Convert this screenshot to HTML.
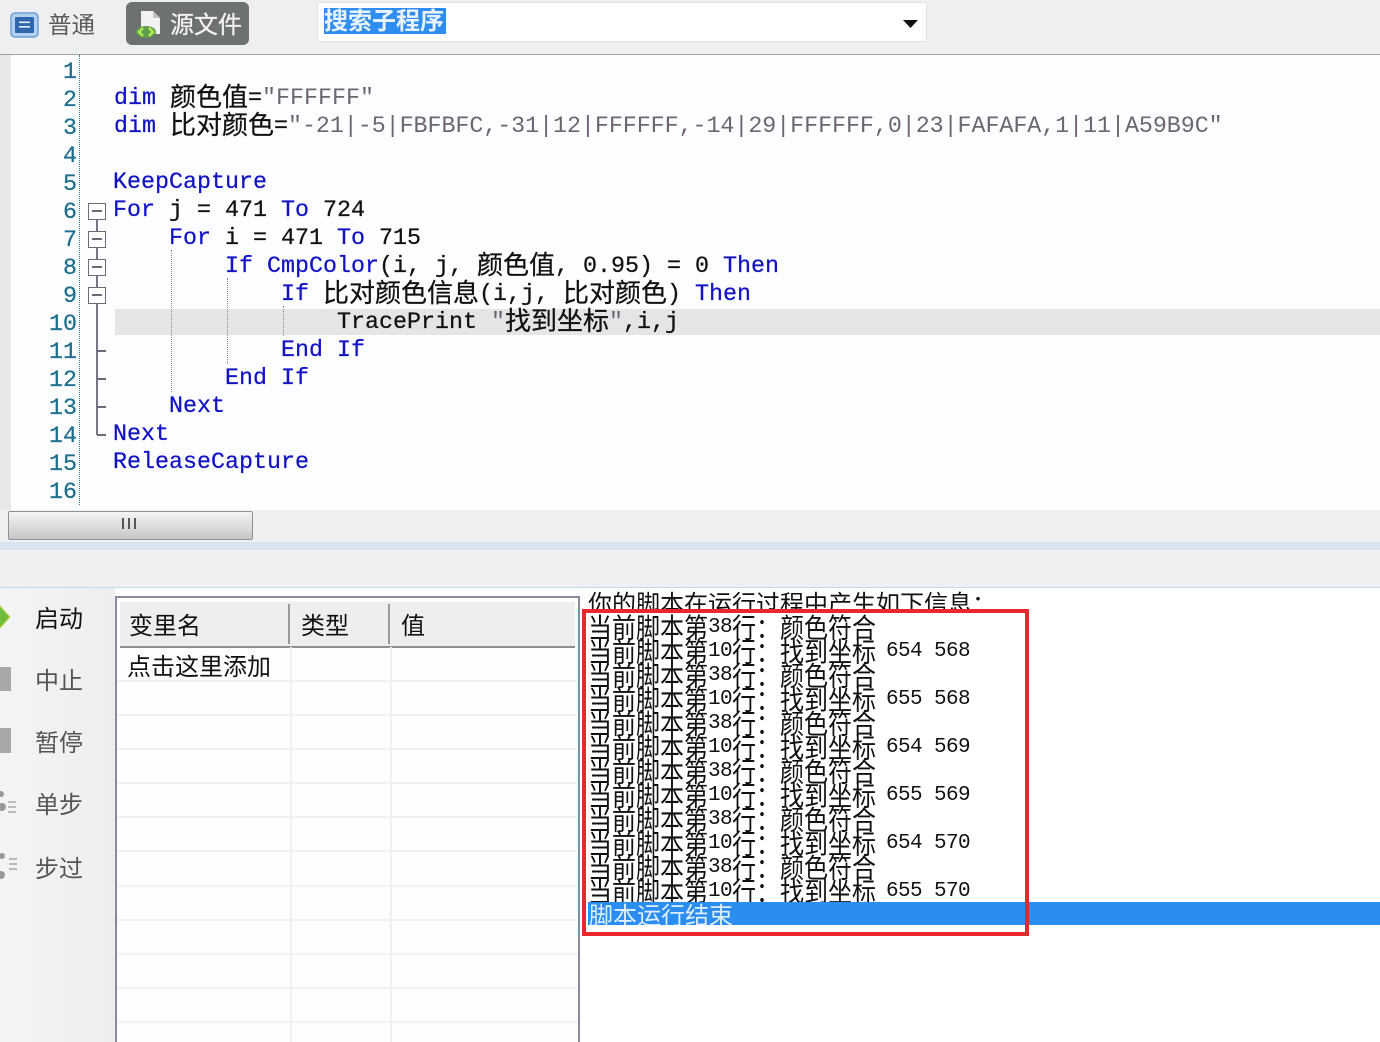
<!DOCTYPE html>
<html lang="zh"><head><meta charset="utf-8"><title>源文件</title>
<style>
html,body{margin:0;padding:0;background:#fff}
#p{position:relative;width:1380px;height:1042px;overflow:hidden;background:#fcfdff;font-family:"Liberation Mono","Noto Sans CJK SC",monospace}
#p div,#p svg{position:absolute}
.l{height:28px;line-height:28px;font-size:23.33px;white-space:pre;color:#111;-webkit-text-stroke:.25px currentColor;margin-top:1px}
.n{left:20px;width:57px;text-align:right;color:#1f6f8c;margin-top:2px}
.k{color:#1313c4}
.s{color:#6b6670;-webkit-text-stroke:0}
.c{display:inline-block;font-family:"Noto Sans CJK SC",sans-serif;font-size:26px;width:26px;text-align:center;color:#111;line-height:28px;vertical-align:top;position:relative;top:-3px}
.u{font-family:"Liberation Sans","Noto Sans CJK SC",sans-serif;font-size:24px;line-height:30px;height:30px;white-space:pre;margin-top:1px}
.o{left:588px;height:24px;line-height:24px;font-size:21px;letter-spacing:-.6px;white-space:pre;color:#111;width:400px;margin-top:2px}
.o b{display:inline-block;letter-spacing:0;font-weight:400;font-family:"Noto Sans CJK SC",sans-serif;font-size:24px;line-height:24px;transform:translateY(-2px) scaleY(1.14);vertical-align:top}
.o b:last-child{margin-right:-2px}
.h{left:117px;width:460px;height:2px;background:#f0f1f4}
.v{top:647px;width:2px;height:395px;background:#eff0f3}
.f{left:88px;width:18px;height:17px;box-sizing:border-box;border:1.5px solid #6f6878;background:#fff}
.f::after{content:"";position:absolute;left:3px;right:3px;top:6px;height:1.5px;background:#6f6878}
.t{left:97px;width:9px;height:1.5px;background:#6f6878}
.d{width:0;border-left:1px dotted #888}
</style></head><body><div id="p">

<!-- toolbar -->
<div style="left:0;top:0;width:1380px;height:54px;background:#eeeff1;border-bottom:1px solid #a3a3a0"></div>
<svg style="left:10px;top:12px" width="30" height="26" viewBox="0 0 30 26"><rect x="1" y="1" width="27" height="24" rx="4" fill="#b4d0f0" stroke="#6d9fd6" stroke-width="1.5"/><rect x="5" y="5" width="19" height="16" rx="1" fill="#2f66ad"/><rect x="9" y="9.500" width="11" height="1.600" fill="#e4eefa"/><rect x="9" y="14" width="11" height="1.600" fill="#e4eefa"/></svg>
<div class="u" style="left:48px;top:9px;color:#5a5a5a;font-size:23.5px">普通</div>
<div style="left:126px;top:2px;width:123px;height:43px;background:#6d716f;border-radius:6px"></div>
<svg style="left:132px;top:9px" width="32" height="30" viewBox="0 0 32 30"><path d="M9 2h12l7 7v16H9z" fill="#f2f2f2"/><path d="M21 2v7h7z" fill="#c4c4c4"/><ellipse cx="14" cy="23" rx="10" ry="6" fill="#5e9e4a"/><path d="M11 19l-4 4 4 4M17 19l4 4-4 4" fill="none" stroke="#b6ec4c" stroke-width="2.400"/></svg>
<div class="u" style="left:170px;top:10px;color:#f2f2f2;-webkit-text-stroke:.3px #f2f2f2">源文件</div>
<div style="left:317px;top:2px;width:610px;height:40px;background:#fff;border-radius:3px;border:1px solid #dfe3e8;box-sizing:border-box"></div>
<div style="left:324px;top:8px;width:122px;height:26px;background:#2f8df0"></div>
<div class="u" style="left:324px;top:6px;color:#e8f3ff;font-weight:700">搜索子程序</div>
<svg style="left:903px;top:19px" width="16" height="10" viewBox="0 0 16 10"><path d="M0 1h15L7.500 9z" fill="#111"/></svg>

<!-- editor -->
<div style="left:0;top:55px;width:11px;height:455px;background:#e7e8ea"></div>
<div style="left:79px;top:55px;height:450px;width:0;border-left:1px dotted #1f7a94"></div>
<div style="left:115px;top:309px;width:1265px;height:26px;background:#e4e5e6"></div>
<div class="d" style="left:171px;top:250px;height:142px"></div>
<div class="d" style="left:227px;top:278px;height:86px"></div>
<div class="d" style="left:283px;top:306px;height:30px"></div>

<div class="l n" style="top:57px">1</div>
<div class="l n" style="top:85px">2</div>
<div class="l n" style="top:113px">3</div>
<div class="l n" style="top:141px">4</div>
<div class="l n" style="top:169px">5</div>
<div class="l n" style="top:197px">6</div>
<div class="l n" style="top:225px">7</div>
<div class="l n" style="top:253px">8</div>
<div class="l n" style="top:281px">9</div>
<div class="l n" style="top:309px">10</div>
<div class="l n" style="top:337px">11</div>
<div class="l n" style="top:365px">12</div>
<div class="l n" style="top:393px">13</div>
<div class="l n" style="top:421px">14</div>
<div class="l n" style="top:449px">15</div>
<div class="l n" style="top:477px">16</div>

<div style="left:96px;top:205px;width:2px;height:230px;background:#7a7484"></div>
<div class="f" style="top:203px"></div>
<div class="f" style="top:231px"></div>
<div class="f" style="top:259px"></div>
<div class="f" style="top:287px"></div>
<div class="t" style="top:350px"></div>
<div class="t" style="top:378px"></div>
<div class="t" style="top:406px"></div>
<div class="t" style="top:434px"></div>

<div class="l" style="left:114px;top:84px"><span class="k">dim</span> <span class="c">颜</span><span class="c">色</span><span class="c">值</span>=<span class="s">"FFFFFF"</span></div>
<div class="l" style="left:114px;top:112px"><span class="k">dim</span> <span class="c">比</span><span class="c">对</span><span class="c">颜</span><span class="c">色</span>=<span class="s" style="letter-spacing:-.05px">"-21|-5|FBFBFC,-31|12|FFFFFF,-14|29|FFFFFF,0|23|FAFAFA,1|11|A59B9C"</span></div>
<div class="l k" style="left:113px;top:168px">KeepCapture</div>
<div class="l" style="left:113px;top:196px"><span class="k">For</span> j = 471 <span class="k">To</span> 724</div>
<div class="l" style="left:169px;top:224px"><span class="k">For</span> i = 471 <span class="k">To</span> 715</div>
<div class="l" style="left:225px;top:252px"><span class="k">If CmpColor</span>(i, j, <span class="c">颜</span><span class="c">色</span><span class="c">值</span>, 0.95) = 0 <span class="k">Then</span></div>
<div class="l" style="left:281px;top:280px"><span class="k">If</span> <span class="c">比</span><span class="c">对</span><span class="c">颜</span><span class="c">色</span><span class="c">信</span><span class="c">息</span>(i,j, <span class="c">比</span><span class="c">对</span><span class="c">颜</span><span class="c">色</span>) <span class="k">Then</span></div>
<div class="l" style="left:337px;top:308px">TracePrint <span class="s">"</span><span class="c">找</span><span class="c">到</span><span class="c">坐</span><span class="c">标</span><span class="s">"</span>,i,j</div>
<div class="l k" style="left:281px;top:336px">End If</div>
<div class="l k" style="left:225px;top:364px">End If</div>
<div class="l k" style="left:169px;top:392px">Next</div>
<div class="l k" style="left:113px;top:420px">Next</div>
<div class="l k" style="left:113px;top:448px">ReleaseCapture</div>

<!-- scrollbar -->
<div style="left:0;top:510px;width:1380px;height:32px;background:#eef0f2"></div>
<div style="left:8px;top:511px;width:243px;height:27px;border:1px solid #8f9296;border-radius:2px;background:linear-gradient(#f4f4f5,#dcdcde 55%,#c4c5c8)"></div>
<div style="left:122px;top:518px;width:2px;height:11px;background:#555"></div>
<div style="left:128px;top:518px;width:2px;height:11px;background:#555"></div>
<div style="left:134px;top:518px;width:2px;height:11px;background:#555"></div>
<div style="left:0;top:542px;width:1380px;height:8px;background:#d9e3f1"></div>
<div style="left:0;top:550px;width:1380px;height:37px;background:#eff0f2"></div>
<div style="left:0;top:587px;width:1380px;height:1px;background:#c9d8e8"></div>

<!-- sidebar -->
<div style="left:0;top:588px;width:115px;height:454px;background:linear-gradient(90deg,#f3f4f6,#eceef0)"></div>
<svg style="left:0;top:604px" width="12" height="26" viewBox="0 0 12 26"><path d="M-1 1L10 13-1 25z" fill="#6fbc3c" stroke="#b9d84a"/></svg>
<div style="left:0;top:667px;width:11px;height:24px;background:#a8a8a8"></div>
<div style="left:0;top:728px;width:11px;height:25px;background:#a8a8a8"></div>
<svg style="left:0;top:790px" width="20" height="30" viewBox="0 0 20 30"><circle cx="1" cy="4" r="3" fill="#999"/><circle cx="2" cy="17" r="4" fill="#999"/><path d="M8 12h8M8 17h8M8 22h8" stroke="#999" stroke-width="1.200"/></svg>
<svg style="left:0;top:851px" width="20" height="34" viewBox="0 0 20 34"><circle cx="2" cy="5" r="3" fill="#999"/><circle cx="1" cy="24" r="4" fill="#999"/><path d="M9 8h8M9 13h8M9 18h8" stroke="#999" stroke-width="1.200"/></svg>
<div class="u" style="left:35px;top:604px;color:#111">启动</div>
<div class="u" style="left:35px;top:666px;color:#555">中止</div>
<div class="u" style="left:35px;top:728px;color:#555">暂停</div>
<div class="u" style="left:35px;top:790px;color:#555">单步</div>
<div class="u" style="left:35px;top:854px;color:#555">步过</div>

<!-- table -->
<div style="left:115px;top:596px;width:465px;height:446px;background:#fcfdff;border:solid #8a8a9c;border-width:2px 2px 0 2px;box-sizing:border-box"></div>
<div style="left:120px;top:602px;width:455px;height:44px;background:#eeeeee;border-bottom:2px solid #8d9196"></div>
<div style="left:288px;top:604px;width:2px;height:40px;background:#9a9a9a"></div>
<div style="left:388px;top:604px;width:2px;height:40px;background:#9a9a9a"></div>
<div class="v" style="left:290px"></div>
<div class="v" style="left:390px"></div>
<div class="h" style="top:680px"></div>
<div class="h" style="top:714px"></div>
<div class="h" style="top:748px"></div>
<div class="h" style="top:782px"></div>
<div class="h" style="top:816px"></div>
<div class="h" style="top:850px"></div>
<div class="h" style="top:885px"></div>
<div class="h" style="top:919px"></div>
<div class="h" style="top:953px"></div>
<div class="h" style="top:987px"></div>
<div class="h" style="top:1021px"></div>
<div class="u" style="left:129px;top:611px;color:#111">变里名</div>
<div class="u" style="left:301px;top:611px;color:#111">类型</div>
<div class="u" style="left:401px;top:611px;color:#111">值</div>
<div class="u" style="left:127px;top:652px;color:#111">点击这里添加</div>

<!-- output -->
<div style="left:581px;top:588px;width:799px;height:454px;background:#fff"></div>
<div style="left:588px;top:588px;width:420px;height:21px;overflow:hidden;font-family:'Noto Sans CJK SC',sans-serif;font-size:24px;line-height:28px;white-space:pre;color:#111">你的脚本在运行过程中产生如下信息：</div>

<div class="o" style="top:614px"><b>当前脚本第</b>38<b>行：颜色符合</b></div>
<div class="o" style="top:638px"><b>当前脚本第</b>10<b>行：找到坐标</b> 654 568</div>
<div class="o" style="top:662px"><b>当前脚本第</b>38<b>行：颜色符合</b></div>
<div class="o" style="top:686px"><b>当前脚本第</b>10<b>行：找到坐标</b> 655 568</div>
<div class="o" style="top:710px"><b>当前脚本第</b>38<b>行：颜色符合</b></div>
<div class="o" style="top:734px"><b>当前脚本第</b>10<b>行：找到坐标</b> 654 569</div>
<div class="o" style="top:758px"><b>当前脚本第</b>38<b>行：颜色符合</b></div>
<div class="o" style="top:782px"><b>当前脚本第</b>10<b>行：找到坐标</b> 655 569</div>
<div class="o" style="top:806px"><b>当前脚本第</b>38<b>行：颜色符合</b></div>
<div class="o" style="top:830px"><b>当前脚本第</b>10<b>行：找到坐标</b> 654 570</div>
<div class="o" style="top:854px"><b>当前脚本第</b>38<b>行：颜色符合</b></div>
<div class="o" style="top:878px"><b>当前脚本第</b>10<b>行：找到坐标</b> 655 570</div>

<div style="left:588px;top:902px;width:792px;height:23px;background:#2c8df0;overflow:hidden"><div style="left:1px;top:-1px;font-family:'Noto Sans CJK SC',sans-serif;font-size:24px;line-height:25px;white-space:pre;color:#dcefff">脚本运行结束</div></div>
<div style="left:582px;top:609px;width:447px;height:327px;box-sizing:border-box;border:4px solid #e8282c"></div>

</div></body></html>
